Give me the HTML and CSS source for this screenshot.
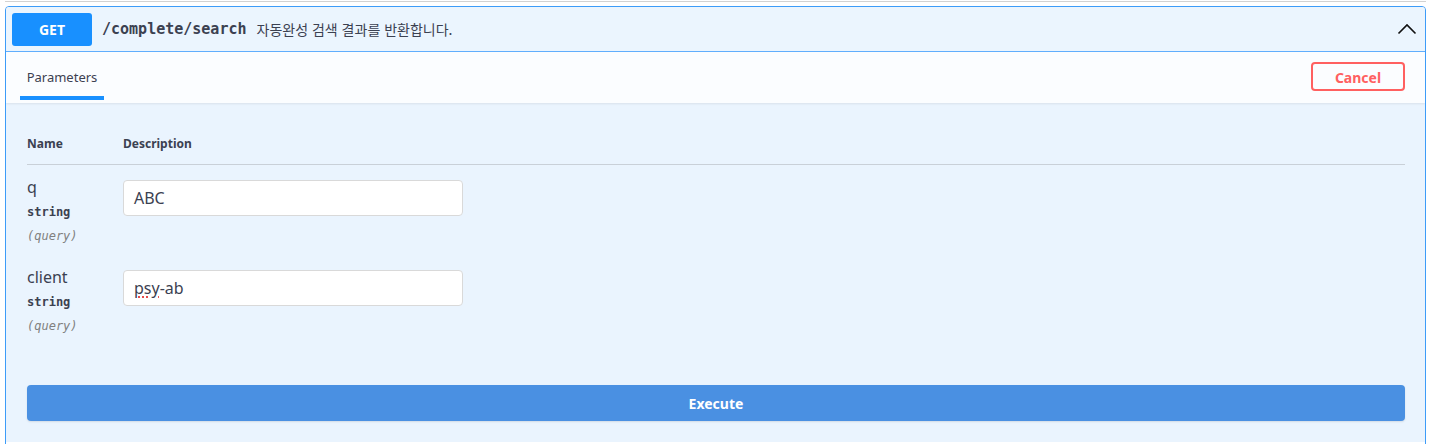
FILE: index.html
```html
<!DOCTYPE html>
<html lang="ko">
<head>
<meta charset="utf-8">
<title>/complete/search</title>
<link rel="stylesheet" href="styles.css">
</head>
<body>
<div class="page">
  <div class="top-rule"></div>
  <div class="opblock">
    <div class="summary">
      <span class="method">GET</span>
      <span class="path">/complete/search</span>
      <span class="summary-desc">자동완성 검색 결과를 반환합니다.</span>
      <svg class="chevron" width="20" height="20" viewBox="0 0 20 20" aria-hidden="true">
        <path d="M1.5 14.5 L10 6 L18.5 14.5" fill="none" stroke="#111" stroke-width="1.6"/>
      </svg>
    </div>
    <div class="tabs-bar">
      <div class="tab active">Parameters</div>
      <button class="btn-cancel">Cancel</button>
    </div>
    <div class="op-body">
      <div class="param-head">
        <div class="col-name">Name</div>
        <div class="col-desc">Description</div>
      </div>
      <div class="param-row">
        <div class="col-name">
          <div class="param-name">q</div>
          <div class="param-type">string</div>
          <div class="param-in">(query)</div>
        </div>
        <div class="col-desc">
          <div class="field">ABC</div>
        </div>
      </div>
      <div class="param-row">
        <div class="col-name">
          <div class="param-name">client</div>
          <div class="param-type">string</div>
          <div class="param-in">(query)</div>
        </div>
        <div class="col-desc">
          <div class="field"><span class="misspelled">psy</span>-ab</div>
        </div>
      </div>
      <button class="btn-execute">Execute</button>
    </div>
    <div class="op-rest"></div>
  </div>
</div>
</body>
</html>
```

FILE: styles.css
```css
* { box-sizing: border-box; }
html, body { margin: 0; padding: 0; background: #fff; }
body {
  font-family: "Noto Sans", "Noto Sans CJK KR", sans-serif;
  color: #3b4151;
  overflow: hidden;
}
.page {
  padding: 1px 21px 0 5px;
}
.top-rule {
  height: 1px;
  background: #d2d2d2;
  margin-bottom: 4px;
}
.opblock {
  border: 1px solid #3d9cf8;
  border-radius: 4px;
  background: #eaf4fe;
  overflow: hidden;
}
.summary {
  display: flex;
  align-items: center;
  height: 45px;
  padding: 0 6px;
  border-bottom: 1px solid #61affe;
  background: #ebf5fe;
}
.method {
  width: 80px;
  height: 33px;
  border-radius: 3px;
  background: #1890ff;
  color: #fff;
  font-weight: 700;
  font-size: 14px;
  display: flex;
  align-items: center;
  justify-content: center;
  font-family: "Noto Sans", sans-serif;
}
.path {
  margin-left: 10px;
  font-family: "DejaVu Sans Mono", monospace;
  font-size: 15px;
  font-weight: 600;
  color: #3b4151;
}
.summary-desc {
  margin-left: 10px;
  font-size: 14px;
  font-family: "Noto Sans CJK KR", "Noto Sans", sans-serif;
  color: #3b4151;
  flex: 1;
}
.chevron {
  margin-right: 2px;
}
.tabs-bar {
  display: flex;
  align-items: stretch;
  justify-content: space-between;
  height: 51px;
  padding: 0 20px 0 14px;
  background: #fbfdff;
  box-shadow: 0 1px 2px rgba(0, 0, 0, 0.08);
  position: relative;
}
.tab {
  width: 84px;
  font-size: 13px;
  display: flex;
  align-items: center;
  justify-content: center;
  color: #3b4151;
}
.tab.active {
  border-bottom: 4px solid #1890ff;
  padding-top: 6px;
  height: 48px;
}
.btn-cancel {
  align-self: flex-start;
  margin-top: 10px;
  width: 94px;
  height: 29px;
  border: 2px solid #ff6060;
  border-radius: 4px;
  background: transparent;
  color: #ff6060;
  font-family: "Noto Sans", sans-serif;
  font-weight: 700;
  font-size: 14px;
  padding: 2px 0 0;
  line-height: 1;
}
.op-body {
  padding: 28px 20px 21px 21px;
}
.param-head {
  display: flex;
  padding: 5px 0 12px;
  border-bottom: 1px solid #c9d0d8;
  font-size: 12px;
  font-weight: 700;
  line-height: 16px;
  color: #3b4151;
}
.col-name {
  width: 96px;
  flex: none;
}
.col-desc {
  flex: 1;
}
.param-row {
  display: flex;
  height: 90px;
  padding-top: 12px;
}
.param-name {
  font-size: 16px;
  line-height: 20px;
  color: #3b4151;
}
.param-type {
  margin-top: 7px;
  font-family: "DejaVu Sans Mono", monospace;
  font-size: 12px;
  font-weight: 700;
  line-height: 16px;
  color: #3b4151;
}
.param-in {
  margin-top: 8px;
  font-family: "DejaVu Sans Mono", monospace;
  font-size: 12px;
  font-style: italic;
  line-height: 16px;
  color: #808080;
}
.field {
  margin-top: 3px;
  width: 340px;
  height: 36px;
  border: 1px solid #d9d9d9;
  border-radius: 4px;
  background: #fff;
  padding: 0 10px;
  font-size: 16px;
  line-height: 34px;
  color: #3b4151;
}
.misspelled {
  text-decoration: underline dotted #e02020;
  text-underline-offset: 3px;
}
.btn-execute {
  display: block;
  width: 100%;
  margin-top: 40px;
  height: 36px;
  border: none;
  border-radius: 4px;
  background: #4a90e2;
  color: #fff;
  font-family: "Noto Sans", sans-serif;
  font-weight: 700;
  font-size: 14px;
  box-shadow: 0 1px 2px rgba(0, 0, 0, 0.1);
}
.op-rest {
  height: 40px;
  background: #fff;
}
```
